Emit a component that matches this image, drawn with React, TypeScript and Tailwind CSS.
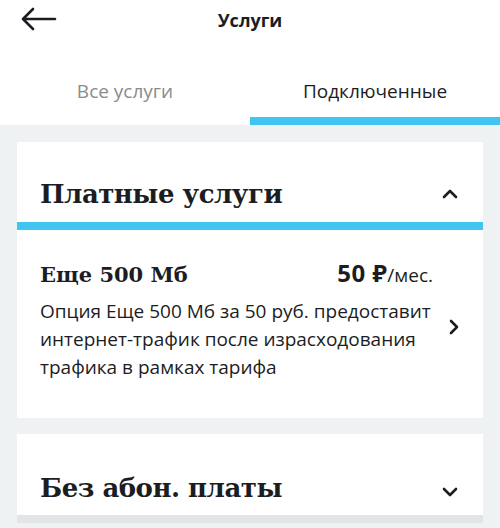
import React from 'react';

const sans = { fontFamily: '"Open Sans", "Noto Sans", sans-serif' };
const slab = { fontFamily: '"DejaVu Serif", "Liberation Serif", serif' };

const Chevron: React.FC<{ dir: 'up' | 'down' | 'right' }> = ({ dir }) => {
  const d = dir === 'up' ? 'M2 9 L8 3 L14 9' : dir === 'down' ? 'M2 3 L8 9 L14 3' : 'M3 2 L9 8 L3 14';
  const box = dir === 'right' ? '0 0 12 16' : '0 0 16 12';
  return (
    <svg viewBox={box} className={dir === 'right' ? 'w-[12px] h-[16px]' : 'w-[16px] h-[12px]'} fill="none" stroke="#1b1d22" strokeWidth={2.6} strokeLinecap="round" strokeLinejoin="round">
      <path d={d} />
    </svg>
  );
};

const App: React.FC = () => {
  return (
    <div className="w-[500px] min-h-[528px] bg-[#eef2f3] text-[#1b1d22]" style={sans}>
      <div className="bg-white">
        <div className="relative h-[40px] flex items-center justify-center">
          <svg viewBox="0 0 36 24" className="absolute left-[21px] top-[7px] w-[36px] h-[24px]" fill="none" stroke="#1b1d22" strokeWidth={2.6} strokeLinecap="round" strokeLinejoin="round">
            <path d="M2 12 H34 M12 2 L2 12 L12 22" />
          </svg>
          <h1 className="text-[18px] font-bold leading-[24px]">Услуги</h1>
        </div>
        <div className="flex">
          <button className="flex-1 flex flex-col items-center">
            <span className="pt-[37px] text-[19px] leading-[28px] text-[#8b8b8b]">Все услуги</span>
            <span className="mt-[12px] h-[8px] w-full" />
          </button>
          <button className="flex-1 flex flex-col items-center">
            <span className="pt-[37px] text-[19px] leading-[28px] text-[#1b1d22]">Подключенные</span>
            <span className="mt-[12px] h-[8px] w-full bg-[#3fc5f0]" />
          </button>
        </div>
      </div>

      <div className="px-[17px] pt-[17px] flex flex-col gap-[16px]">
        <div className="bg-white">
          <div className="flex items-center justify-between pl-[23px] pr-[25px] pt-[34px] pb-[10px]">
            <h2 className="text-[26px] font-bold leading-[36px] tracking-[-0.5px]" style={slab}>Платные услуги</h2>
            <Chevron dir="up" />
          </div>
          <div className="h-[8px] bg-[#3fc5f0]" />
          <div className="flex items-center pl-[23px] pr-[23px] pt-[30px] pb-[37px]">
            <div className="flex-1">
              <div className="flex items-baseline justify-between">
                <h3 className="text-[21px] font-bold leading-[26px]" style={slab}>Еще 500 Мб</h3>
                <div className="leading-[26px]">
                  <span className="text-[24px] font-bold tracking-[0.5px]">50 ₽</span>
                  <span className="text-[19px]">/мес.</span>
                </div>
              </div>
              <p className="mt-[8px] text-[19px] leading-[28px] max-w-[400px]">
                Опция Еще 500 Мб за 50 руб. предоставит интернет-трафик после израсходования трафика в рамках тарифа
              </p>
            </div>
            <div className="pl-[15px] pt-[12px]">
              <Chevron dir="right" />
            </div>
          </div>
        </div>

        <div>
          <div className="bg-white flex items-center justify-between pl-[23px] pr-[25px] pt-[36px] pb-[9px]">
            <h2 className="text-[26px] font-bold leading-[36px] tracking-[-0.5px]" style={slab}>Без абон. платы</h2>
            <div className="pt-[8px]">
              <Chevron dir="down" />
            </div>
          </div>
          <div className="h-[8px] bg-[#e1e5e6]" />
        </div>
      </div>
    </div>
  );
};

export default App;
